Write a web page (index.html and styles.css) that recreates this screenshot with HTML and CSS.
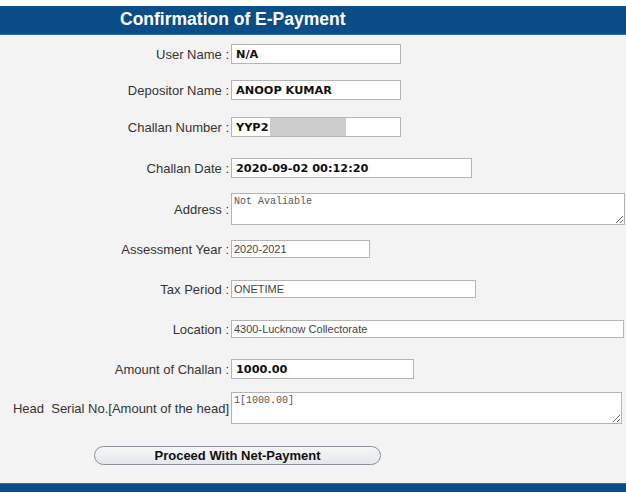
FILE: index.html
```html
<!DOCTYPE html>
<html>
<head>
	<meta name="viewport" content="width=device-width, initial-scale=1">
	<link rel="stylesheet" href="styles.css">
</head>
<body>
	<div class="title_bar">
		<h1>Confirmation of E-Payment</h1>
	</div>
	<div class="form_area">
		<table class="form_table">
			<tr class="r_user">
				<td class="lbl">User Name :</td>
				<td><input class="txt bold w170" type="text" value="N/A" readonly></td>
			</tr>
			<tr class="r_dep">
				<td class="lbl">Depositor Name :</td>
				<td><input class="txt bold w170" type="text" value="ANOOP KUMAR" readonly></td>
			</tr>
			<tr class="r_num">
				<td class="lbl">Challan Number :</td>
				<td>
					<span class="masked">
						<input class="txt bold w170" type="text" value="YYP2" readonly>
						<span class="blur_box"></span>
					</span>
				</td>
			</tr>
			<tr class="r_date">
				<td class="lbl">Challan Date :</td>
				<td><input class="txt bold w241" type="text" value="2020-09-02 00:12:20" readonly></td>
			</tr>
			<tr>
				<td class="lbl">Address :</td>
				<td><textarea class="area w394" readonly>Not Avaliable</textarea></td>
			</tr>
			<tr>
				<td class="lbl">Assessment Year :</td>
				<td><input class="txt light w139" type="text" value="2020-2021" readonly></td>
			</tr>
			<tr>
				<td class="lbl">Tax Period :</td>
				<td><input class="txt light w245" type="text" value="ONETIME" readonly></td>
			</tr>
			<tr>
				<td class="lbl">Location :</td>
				<td><input class="txt light w393" type="text" value="4300-Lucknow Collectorate" readonly></td>
			</tr>
			<tr>
				<td class="lbl">Amount of Challan :</td>
				<td><input class="txt bold w183" type="text" value="1000.00" readonly></td>
			</tr>
			<tr class="r_head">
				<td class="lbl">Head&nbsp; Serial No.[Amount of the head]</td>
				<td><textarea class="area w391" readonly>1[1000.00]</textarea></td>
			</tr>
		</table>
		<div class="btn_row">
			<button class="proceed" type="button">Proceed With Net-Payment</button>
		</div>
	</div>
	<div class="bottom_bar"></div>
</body>
</html>
```

FILE: styles.css
```css
body {
	margin:0;
	background:#fff;
	font-family:"Liberation Sans", Arial, sans-serif;
}

.title_bar {
	margin-top:6px;
	height:29px;
	background:#0a4d87;
	border-bottom:1px solid #2d6aa0;
	box-sizing:border-box;
}

.title_bar h1 {
	margin:0;
	padding:3px 0 0 120px;
	font-size:17.5px;
	line-height:20px;
	font-weight:bold;
	color:#fff;
}

.form_area {
	background:#f3f3f3;
	height:448px;
}

.form_table {
	border-collapse:collapse;
	border-spacing:0;
}

.form_table td {
	padding:0;
	height:40px;
	vertical-align:middle;
}

.form_table tr.r_user td { height:38px; }
.form_table tr.r_dep td { height:34px; }
.form_table tr.r_date td { height:42px; }
.form_table tr.r_head td { height:38px; }

.lbl {
	width:229px;
	padding-right:2px !important;
	text-align:right;
	font-size:13px;
	color:#333;
	white-space:nowrap;
}

.txt {
	display:block;
	margin:0;
	box-sizing:border-box;
	border:1px solid #b4b4b4;
	background:#fff;
	padding:0 4px;
	outline:none;
}

.txt.bold {
	height:20px;
	font-family:"DejaVu Sans", Verdana, sans-serif;
	font-weight:bold;
	font-size:11.3px;
	color:#111;
}

.txt.light {
	height:18px;
	padding:0 2px;
	font-family:"Liberation Sans", Arial, sans-serif;
	font-size:11px;
	color:#444;
}

.area {
	display:block;
	margin:0;
	box-sizing:border-box;
	height:32px;
	border:1px solid #b4b4b4;
	background:#fff;
	padding:2px 2px;
	font-family:"Liberation Mono", "DejaVu Sans Mono", monospace;
	font-size:10px;
	color:#555;
	outline:none;
}

.w139 { width:139px; }
.w170 { width:170px; }
.w183 { width:183px; }
.w241 { width:241px; }
.w245 { width:245px; }
.w391 { width:391px; }
.w393 { width:393px; }
.w394 { width:394px; }

/* redacted part of the challan number */
.masked {
	display:block;
	position:relative;
	width:170px;
}

.blur_box {
	position:absolute;
	left:39px;
	top:1px;
	width:76px;
	height:18px;
	background:#cdcdcd;
}

.btn_row {
	padding:19px 0 0 94px;
}

.proceed {
	display:block;
	width:287px;
	height:19px;
	padding:0;
	border:1px solid #8b929c;
	border-radius:10px;
	background:linear-gradient(#f6f6f6, #e4e7eb);
	font-family:"Liberation Sans", Arial, sans-serif;
	font-size:13px;
	font-weight:bold;
	color:#111;
}

.bottom_bar {
	height:9px;
	background:#0a4d87;
	border-top:1px solid #2d6aa0;
	box-sizing:border-box;
}
```
